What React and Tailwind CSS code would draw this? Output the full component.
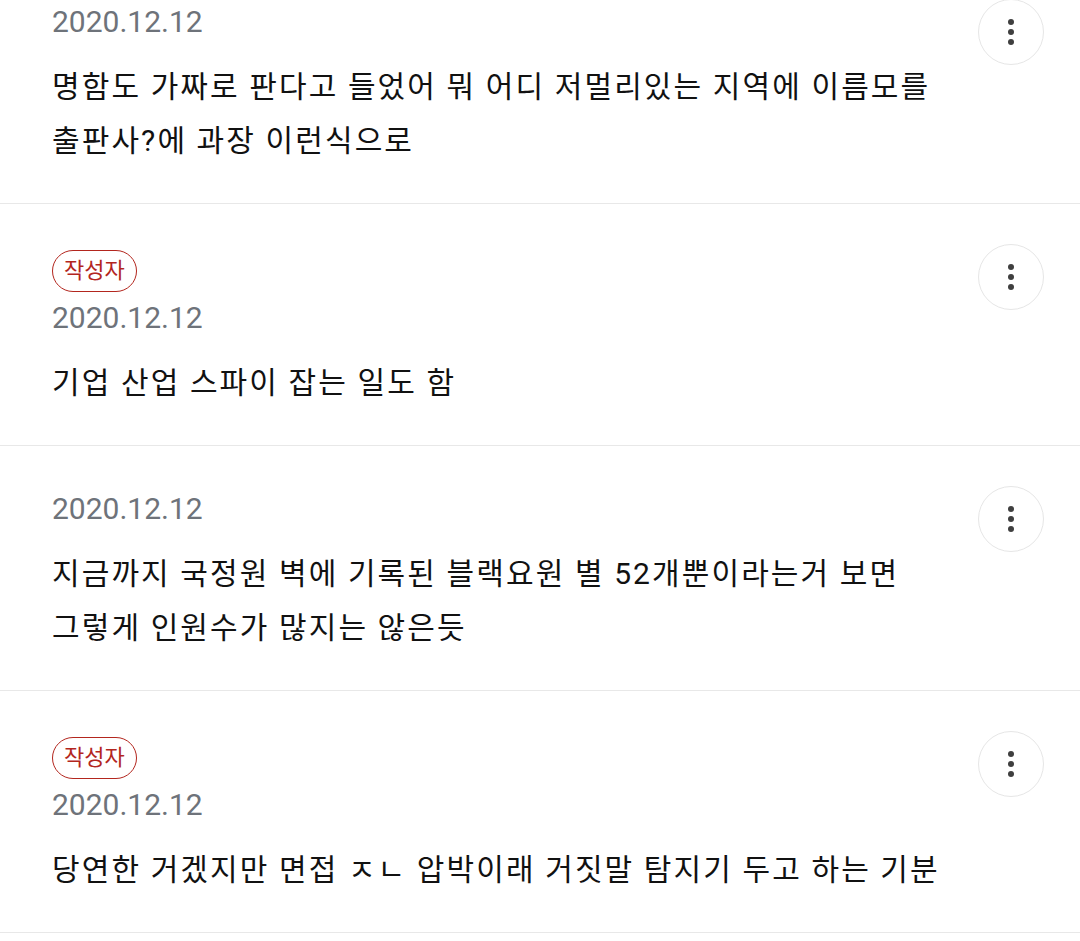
import React from "react";

const comments = [
  { author: false, lines: ["명함도 가짜로 판다고 들었어 뭐 어디 저멀리있는 지역에 이름모를", "출판사?에 과장 이런식으로"] },
  { author: true, lines: ["기업 산업 스파이 잡는 일도 함"] },
  { author: false, lines: ["지금까지 국정원 벽에 기록된 블랙요원 별 52개뿐이라는거 보면", "그렇게 인원수가 많지는 않은듯"] },
  { author: true, lines: ["당연한 거겠지만 면접 ㅈㄴ 압박이래 거짓말 탐지기 두고 하는 기분"] },
];

function MoreButton() {
  return (
    <button className="w-[66px] h-[66px] shrink-0 rounded-full border-[1.5px] border-[#e6e6e6] bg-white flex flex-col items-center justify-center gap-[4px]">
      <span className="w-[6px] h-[6px] rounded-full bg-[#3f3f3f]" />
      <span className="w-[6px] h-[6px] rounded-full bg-[#3f3f3f]" />
      <span className="w-[6px] h-[6px] rounded-full bg-[#3f3f3f]" />
    </button>
  );
}

export default function App() {
  return (
    <div className="w-[1080px] h-[941px] overflow-hidden bg-white" style={{ fontFamily: "Roboto, 'Noto Sans CJK KR', sans-serif" }}>
      <div className="-mt-[41px]">
        {comments.map((c, i) => (
          <div key={i} className="flex items-start justify-between pl-[52px] pr-[36px] pt-[40px] pb-[35px] border-b-[1.5px] border-[#e8e8e8]">
            <div className="flex flex-col items-start pt-[6px]">
              {c.author && (
                <span className="h-[42px] px-[11px] mb-[9px] rounded-full border-[1.5px] border-[#b3261e] text-[#b3261e] text-[22px] leading-[38px] flex items-center">
                  작성자
                </span>
              )}
              <div className="text-[30px] leading-[34px] text-[#6e737a]">2020.12.12</div>
              <div className="mt-[21px] text-[30px] leading-[54px] tracking-[2.1px] text-[#111111]">
                {c.lines.map((l, j) => (
                  <div key={j}>{l}</div>
                ))}
              </div>
            </div>
            <MoreButton />
          </div>
        ))}
      </div>
    </div>
  );
}
